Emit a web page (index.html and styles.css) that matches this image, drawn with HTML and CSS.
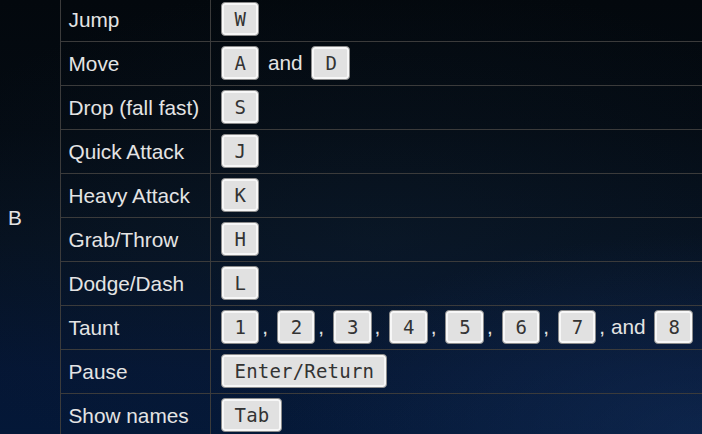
FILE: index.html
```html
<!DOCTYPE html>
<html>
<head>
<meta charset="utf-8">
<link rel="stylesheet" href="styles.css">
</head>
<body>
<table class="controls">
  <colgroup>
    <col class="c-player">
    <col class="c-action">
    <col class="c-keys">
  </colgroup>
  <tbody>
    <tr>
      <td class="player" rowspan="10">B</td>
      <td class="action">Jump</td>
      <td class="keys"><kbd>W</kbd></td>
    </tr>
    <tr>
      <td class="action">Move</td>
      <td class="keys"><kbd>A</kbd> and <kbd>D</kbd></td>
    </tr>
    <tr>
      <td class="action">Drop (fall fast)</td>
      <td class="keys"><kbd>S</kbd></td>
    </tr>
    <tr>
      <td class="action">Quick Attack</td>
      <td class="keys"><kbd>J</kbd></td>
    </tr>
    <tr>
      <td class="action">Heavy Attack</td>
      <td class="keys"><kbd>K</kbd></td>
    </tr>
    <tr>
      <td class="action">Grab/Throw</td>
      <td class="keys"><kbd>H</kbd></td>
    </tr>
    <tr>
      <td class="action">Dodge/Dash</td>
      <td class="keys"><kbd>L</kbd></td>
    </tr>
    <tr>
      <td class="action">Taunt</td>
      <td class="keys"><kbd>1</kbd>, <kbd>2</kbd>, <kbd>3</kbd>, <kbd>4</kbd>, <kbd>5</kbd>, <kbd>6</kbd>, <kbd>7</kbd>, and <kbd>8</kbd></td>
    </tr>
    <tr>
      <td class="action">Pause</td>
      <td class="keys"><kbd>Enter/Return</kbd></td>
    </tr>
    <tr>
      <td class="action">Show names</td>
      <td class="keys"><kbd>Tab</kbd></td>
    </tr>
  </tbody>
</table>
</body>
</html>
```

FILE: styles.css
```css
html, body {
  margin: 0;
  padding: 0;
  height: 100%;
  overflow: hidden;
}

body {
  background:
    radial-gradient(ellipse 420px 200px at 700px 434px, rgba(30, 60, 110, 0.35), rgba(30, 60, 110, 0) 100%),
    radial-gradient(ellipse 500px 260px at 380px 240px, rgba(20, 40, 60, 0.25), rgba(20, 40, 60, 0) 100%),
    linear-gradient(to bottom, #03080d 0%, #040b13 30%, #06111f 55%, #051634 85%, #041838 100%);
  font-family: "Liberation Sans", Arial, sans-serif;
  font-size: 20.8px;
  color: #e4e4e4;
}

.controls {
  border-collapse: collapse;
  table-layout: fixed;
  width: 702px;
  margin-top: -3px;
}

.c-player { width: 60px; }
.c-action { width: 150px; }

.controls td {
  height: 43px;
  padding: 0 8px;
  vertical-align: middle;
  border-top: 1px solid #3b3b3b;
  border-bottom: 1px solid #3b3b3b;
  white-space: nowrap;
}

.controls td.player {
  border-top: none;
  border-bottom: none;
  border-right: 1px solid #3b3b3b;
  padding-left: 8px;
}

.controls td.action {
  border-right: 1px solid #3b3b3b;
}

.controls td.keys {
  padding-left: 7px;
}

kbd {
  display: inline-block;
  font-family: "DejaVu Sans Mono", monospace;
  font-size: 19px;
  letter-spacing: 0.2px;
  line-height: 24px;
  padding: 4px 12px 4px 13px;
  margin: -2px 3px 0;
  color: #333;
  background: #e1e1e1;
  border: 1px solid #8c8c8c;
  border-radius: 4px;
  box-shadow: inset 0 0 0 2px #f7f7f7;
  vertical-align: middle;
}
```
